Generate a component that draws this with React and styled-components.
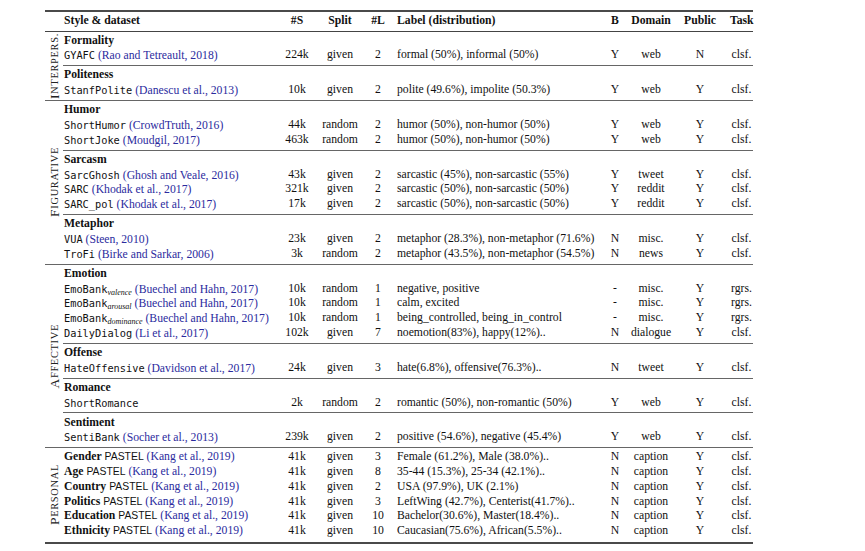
import React from 'react'
import styled, { createGlobalStyle } from 'styled-components'

const Global = createGlobalStyle`
  html, body { margin: 0; padding: 0; background: #fff; }
  body { font-family: "Liberation Serif", "Times New Roman", serif; color: #111; }
`

const Page = styled.div`
  padding: 9.5px 0 0 45px;
  width: 708px;
`

const HeavyRule = styled.div`
  height: 2px;
  background: #4a4a4a;
  margin: ${p => p.$top ? '0 0 2.8px' : '3px 0 0'};
`

const HeadRule = styled.div`
  height: 1px;
  background: #444;
  margin: 1.8px 0 1.8px;
`

const Rule = styled.div`
  height: 1px;
  background: #666;
  margin: 2.1px 0;
`

const Line = styled.div`
  display: flex;
`

const Side = styled.div`
  width: 18px;
  flex: none;
  contain: size;
  display: flex;
  align-items: center;
  justify-content: center;
`

const SideText = styled.span`
  writing-mode: vertical-rl;
  transform: rotate(180deg);
  font-size: 10.4px;
  letter-spacing: 0.7px;
  line-height: 13px;
  white-space: nowrap;
  color: #222;
  b {
    font-weight: normal;
    font-size: 13.5px;
  }
`

const Body = styled.div`
  flex: 1;
  display: flex;
  flex-direction: column;
`

const Grid = styled.div`
  display: grid;
  grid-template-columns: 217px 34px 52px 24px 214px 22px 50px 48px 29px;
  height: 14.8px;
  line-height: 14.8px;
  font-size: 11.7px;
  white-space: nowrap;
  font-weight: ${p => p.$head ? 'bold' : 'normal'};
`

const Cell = styled.div`
  text-align: ${p => p.$left ? 'left' : 'center'};
  padding-left: ${p => p.$pad || 0}px;
`

const Title = styled.div`
  height: 14.8px;
  line-height: 14.8px;
  font-size: 11.7px;
  font-weight: bold;
  padding-left: 1px;
`

const Mono = styled.span`
  font-family: "DejaVu Sans Mono", "Liberation Mono", monospace;
  font-size: 10.3px;
`

const Sans = styled.span`
  font-family: "Liberation Sans", Arial, sans-serif;
  font-size: 10.4px;
`

const Sub = styled.sub`
  font-style: italic;
  font-size: 8px;
  line-height: 0;
  vertical-align: -2px;
`

const Cite = styled.span`
  color: #2b2b9e;
`

const groups = [
  { cap: 'I', rest: 'NTERPERS.', subs: [
    { title: 'Formality', rows: [
      { mono: 'GYAFC', cite: 'Rao and Tetreault, 2018', d: ['224k', 'given', '2', 'formal (50%), informal (50%)', 'Y', 'web', 'N', 'clsf.'] },
    ] },
    { title: 'Politeness', rows: [
      { mono: 'StanfPolite', cite: 'Danescu et al., 2013', d: ['10k', 'given', '2', 'polite (49.6%), impolite (50.3%)', 'Y', 'web', 'Y', 'clsf.'] },
    ] },
  ] },
  { cap: 'F', rest: 'IGURATIVE', subs: [
    { title: 'Humor', rows: [
      { mono: 'ShortHumor', cite: 'CrowdTruth, 2016', d: ['44k', 'random', '2', 'humor (50%), non-humor (50%)', 'Y', 'web', 'Y', 'clsf.'] },
      { mono: 'ShortJoke', cite: 'Moudgil, 2017', d: ['463k', 'random', '2', 'humor (50%), non-humor (50%)', 'Y', 'web', 'Y', 'clsf.'] },
    ] },
    { title: 'Sarcasm', rows: [
      { mono: 'SarcGhosh', cite: 'Ghosh and Veale, 2016', d: ['43k', 'given', '2', 'sarcastic (45%), non-sarcastic (55%)', 'Y', 'tweet', 'Y', 'clsf.'] },
      { mono: 'SARC', cite: 'Khodak et al., 2017', d: ['321k', 'given', '2', 'sarcastic (50%), non-sarcastic (50%)', 'Y', 'reddit', 'Y', 'clsf.'] },
      { mono: 'SARC_pol', cite: 'Khodak et al., 2017', d: ['17k', 'given', '2', 'sarcastic (50%), non-sarcastic (50%)', 'Y', 'reddit', 'Y', 'clsf.'] },
    ] },
    { title: 'Metaphor', rows: [
      { mono: 'VUA', cite: 'Steen, 2010', d: ['23k', 'given', '2', 'metaphor (28.3%), non-metaphor (71.6%)', 'N', 'misc.', 'Y', 'clsf.'] },
      { mono: 'TroFi', cite: 'Birke and Sarkar, 2006', d: ['3k', 'random', '2', 'metaphor (43.5%), non-metaphor (54.5%)', 'N', 'news', 'Y', 'clsf.'] },
    ] },
  ] },
  { cap: 'A', rest: 'FFECTIVE', subs: [
    { title: 'Emotion', rows: [
      { mono: 'EmoBank', sub: 'valence', cite: 'Buechel and Hahn, 2017', d: ['10k', 'random', '1', 'negative, positive', '-', 'misc.', 'Y', 'rgrs.'] },
      { mono: 'EmoBank', sub: 'arousal', cite: 'Buechel and Hahn, 2017', d: ['10k', 'random', '1', 'calm, excited', '-', 'misc.', 'Y', 'rgrs.'] },
      { mono: 'EmoBank', sub: 'dominance', cite: 'Buechel and Hahn, 2017', d: ['10k', 'random', '1', 'being_controlled, being_in_control', '-', 'misc.', 'Y', 'rgrs.'] },
      { mono: 'DailyDialog', cite: 'Li et al., 2017', d: ['102k', 'given', '7', 'noemotion(83%), happy(12%)..', 'N', 'dialogue', 'Y', 'clsf.'] },
    ] },
    { title: 'Offense', rows: [
      { mono: 'HateOffensive', cite: 'Davidson et al., 2017', d: ['24k', 'given', '3', 'hate(6.8%), offensive(76.3%)..', 'N', 'tweet', 'Y', 'clsf.'] },
    ] },
    { title: 'Romance', rows: [
      { mono: 'ShortRomance', d: ['2k', 'random', '2', 'romantic (50%), non-romantic (50%)', 'Y', 'web', 'Y', 'clsf.'] },
    ] },
    { title: 'Sentiment', rows: [
      { mono: 'SentiBank', cite: 'Socher et al., 2013', d: ['239k', 'given', '2', 'positive (54.6%), negative (45.4%)', 'Y', 'web', 'Y', 'clsf.'] },
    ] },
  ] },
  { cap: 'P', rest: 'ERSONAL', subs: [
    { rows: [
      { bold: 'Gender', d: ['41k', 'given', '3', 'Female (61.2%), Male (38.0%)..', 'N', 'caption', 'Y', 'clsf.'] },
      { bold: 'Age', d: ['41k', 'given', '8', '35-44 (15.3%), 25-34 (42.1%)..', 'N', 'caption', 'Y', 'clsf.'] },
      { bold: 'Country', d: ['41k', 'given', '2', 'USA (97.9%), UK (2.1%)', 'N', 'caption', 'Y', 'clsf.'] },
      { bold: 'Politics', d: ['41k', 'given', '3', 'LeftWing (42.7%), Centerist(41.7%)..', 'N', 'caption', 'Y', 'clsf.'] },
      { bold: 'Education', d: ['41k', 'given', '10', 'Bachelor(30.6%), Master(18.4%)..', 'N', 'caption', 'Y', 'clsf.'] },
      { bold: 'Ethnicity', d: ['41k', 'given', '10', 'Caucasian(75.6%), African(5.5%)..', 'N', 'caption', 'Y', 'clsf.'] },
    ] },
  ] },
]

const Cells = ({ first, d, head }) => (
  <Grid $head={head}>
    <Cell $left $pad={1}>{first}</Cell>
    <Cell>{d[0]}</Cell>
    <Cell>{d[1]}</Cell>
    <Cell>{d[2]}</Cell>
    <Cell $left $pad={7}>{d[3]}</Cell>
    <Cell>{d[4]}</Cell>
    <Cell>{d[5]}</Cell>
    <Cell>{d[6]}</Cell>
    <Cell $pad={6}>{d[7]}</Cell>
  </Grid>
)

const Dataset = ({ r }) => {
  if (r.bold) {
    return (
      <>
        <b>{r.bold}</b> <Sans>PASTEL</Sans> <Cite>(Kang et al., 2019)</Cite>
      </>
    )
  }
  return (
    <>
      <Mono>{r.mono}</Mono>
      {r.sub && <Sub>{r.sub}</Sub>}
      {r.cite && <> <Cite>({r.cite})</Cite></>}
    </>
  )
}

const App = () => {
  return (
    <Page>
      <Global />
      <HeavyRule $top />
      <Line>
        <Side />
        <Body>
          <Cells head first="Style & dataset" d={['#S', 'Split', '#L', 'Label (distribution)', 'B', 'Domain', 'Public', 'Task']} />
        </Body>
      </Line>
      <HeadRule />
      {groups.map((g, gi) => (
        <React.Fragment key={g.rest}>
          {gi > 0 && <Rule />}
          <Line>
            <Side>
              <SideText><b>{g.cap}</b>{g.rest}</SideText>
            </Side>
            <Body>
              {g.subs.map((s, si) => (
                <React.Fragment key={si}>
                  {si > 0 && <Rule />}
                  {s.title && <Title>{s.title}</Title>}
                  {s.rows.map((r, ri) => (
                    <Cells key={ri} first={<Dataset r={r} />} d={r.d} />
                  ))}
                </React.Fragment>
              ))}
            </Body>
          </Line>
        </React.Fragment>
      ))}
      <HeavyRule />
    </Page>
  )
}

export default App
